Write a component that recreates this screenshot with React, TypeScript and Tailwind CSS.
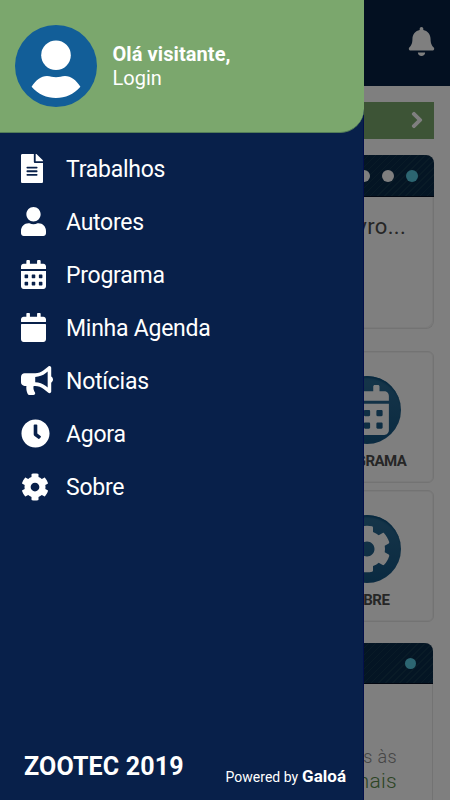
import React from 'react';
import {
  FaBell,
  FaBullhorn,
  FaCalendar,
  FaCalendarAlt,
  FaChevronRight,
  FaClock,
  FaCog,
  FaFileAlt,
  FaUser,
} from 'react-icons/fa';

const menuItems = [
  { label: 'Trabalhos', icon: FaFileAlt, iconClass: 'w-[22px] h-[29px]' },
  { label: 'Autores', icon: FaUser, iconClass: 'w-[25px] h-[29px]' },
  { label: 'Programa', icon: FaCalendarAlt, iconClass: 'w-[25px] h-[29px]' },
  { label: 'Minha Agenda', icon: FaCalendar, iconClass: 'w-[25px] h-[29px]' },
  { label: 'Notícias', icon: FaBullhorn, iconClass: 'w-[32px] h-[29px]' },
  { label: 'Agora', icon: FaClock, iconClass: 'w-[29px] h-[29px]' },
  { label: 'Sobre', icon: FaCog, iconClass: 'w-[28px] h-[28px]' },
];

const stripes =
  'bg-[repeating-linear-gradient(135deg,#092a48_0px,#092a48_4px,#12364f_4px,#12364f_5px)]';

const Avatar = () => (
  <svg viewBox="0 0 82 82" className="w-[82px] h-[82px] shrink-0">
    <circle cx="41" cy="41" r="41" fill="#125e98" />
    <circle cx="41" cy="30.2" r="14.8" fill="#fff" />
    <path
      d="M16.600 61.800C20.500 55.500 26 51 32 51c3.500 0 5.500 1.300 9 1.300s5.500-1.300 9-1.300c6 0 11.500 4.500 15.400 10.800C58.500 69.500 50.500 73 41 73S23.500 69.500 16.600 61.800z"
      fill="#fff"
    />
  </svg>
);

const Tile = ({ label, icon: Icon, size }: { label: string; icon: any; size: number }) => (
  <div className="w-[134px] h-[132px] border border-[#e6e6e6] shadow-[inset_0_0_0_1px_#f4f4f4] rounded-md bg-white flex flex-col items-center pt-6 shrink-0">
    <div className="w-[68px] h-[68px] rounded-full bg-linear-to-b from-[#2c6b93] to-[#135482] shadow-[inset_0_3px_2px_-1px_#0c4f7c] flex items-center justify-center text-white shrink-0">
      <Icon size={size} />
    </div>
    <span className="mt-[7px] text-[15px] leading-5 font-bold tracking-[-0.5px] text-[#4c4c4c]">{label}</span>
  </div>
);

const HomePage = () => (
  <div className="h-full bg-white flex flex-col">
    <header className="h-[86px] bg-[#062042] flex items-center justify-end pr-[14px] pb-[3px] text-white shrink-0">
      <FaBell size={29} />
    </header>

    <main className="flex flex-col pl-4 pr-4 pt-[15.500px]">
      <div className="h-[37.500px] bg-[#7aa86d] flex items-center justify-end pr-2 text-white shrink-0">
        <FaChevronRight size={18} stroke="currentColor" strokeWidth={30} className="overflow-visible" />
      </div>

      {/* Destaques */}
      <section className="mt-4 h-[174px] rounded-lg border-r border-b border-[#e6e6e6] shadow-[inset_-1px_-1px_0_#f4f4f4] shrink-0">
        <div className={`h-[42px] -mr-px rounded-t-lg border-b border-[#020d20] flex items-center justify-end gap-3 pr-4 ${stripes}`}>
          <span className="w-3 h-3 rounded-full bg-white" />
          <span className="w-3 h-3 rounded-full bg-white" />
          <span className="w-3 h-3 rounded-full bg-[#58cbe3]" />
        </div>
        <p className="pt-4 pr-[27px] text-right text-[22px] leading-7 tracking-[0.3px] text-[#4c4c4c]">Livro...</p>
      </section>

      {/* Atalhos */}
      <div className="mt-[22px] flex flex-col items-end gap-[7px]">
        <Tile label="PROGRAMA" icon={FaCalendarAlt} size={50} />
        <Tile label="SOBRE" icon={FaCog} size={48} />
      </div>

      <section className="mt-[21px] mr-px h-[200px] rounded-lg border-r border-[#e6e6e6] shrink-0">
        <div className={`h-[41px] -mr-px rounded-t-lg border-b border-[#020d20] flex items-center justify-end pr-[17px] ${stripes}`}>
          <span className="w-[11px] h-[11px] rounded-full bg-[#58cbe3]" />
        </div>
        <div className="pt-[60px] pr-[35px] text-right">
          <p className="text-[18px] leading-[25px] font-light tracking-[0.350px] text-[#8c8c8c]">ões às</p>
          <p className="text-[21px] leading-[24px] font-light tracking-[0.300px] text-[#588a49]">mais</p>
        </div>
      </section>
    </main>
  </div>
);

const Drawer = () => (
  <aside className="absolute inset-y-0 left-0 w-[364px] bg-[#08204a] border-r border-[#03104a] text-white flex flex-col">
    <div className="h-[133px] -mr-px bg-[#7ba76d] rounded-br-[24px] border-b border-[#537d58] flex items-center pl-[15px] shrink-0">
      <Avatar />
      <div className="ml-[15.500px] pb-px">
        <p className="text-[20px] leading-6 font-bold tracking-[0.08px]">Olá visitante,</p>
        <p className="text-[20px] leading-6">Login</p>
      </div>
    </div>

    <nav className="pt-[9px] flex flex-col">
      {menuItems.map(({ label, icon: Icon, iconClass }) => (
        <a key={label} href="#" className="h-[53px] pl-[21px] flex items-center">
          <span className="w-[45px] shrink-0">
            <Icon className={iconClass} preserveAspectRatio="none" />
          </span>
          <span className="pt-[3px] text-[23px] leading-8 tracking-[-0.25px]">{label}</span>
        </a>
      ))}
    </nav>

    <footer className="mt-auto h-[54px] pl-6 pr-[17px] flex items-start justify-between">
      <span className="pt-px text-[25px] leading-[40px] font-bold tracking-[0.150px]">ZOOTEC 2019</span>
      <span className="pt-5 flex items-baseline gap-1 text-[14px] leading-5 whitespace-nowrap">
        Powered by <b className="text-[17px] font-bold">Galoá</b>
      </span>
    </footer>
  </aside>
);

export default function App() {
  return (
    <div className="relative w-[450px] h-[800px] overflow-hidden font-[Roboto,sans-serif]">
      <HomePage />
      <div className="absolute inset-0 bg-black/50" />
      <Drawer />
    </div>
  );
}
